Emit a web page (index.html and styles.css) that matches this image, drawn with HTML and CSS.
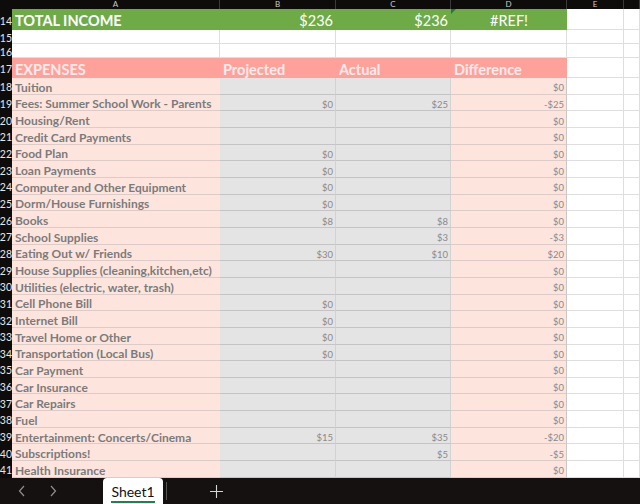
FILE: index.html
```html
<!DOCTYPE html>
<html lang="en">
<head>
    <meta charset="UTF-8">
    <title>Budget - Sheet1</title>
    <link rel="stylesheet" href="styles.css">
</head>
<body>
    <div class="sheet">
        <div class="row col-head">
            <div class="rn corner"></div>
            <div class="ch">A</div>
            <div class="ch">B</div>
            <div class="ch">C</div>
            <div class="ch">D</div>
            <div class="ch">E</div>
            <div class="ch"></div>
        </div>

        <div class="row r-total">
            <div class="rn">14</div>
            <div class="c green label-big">TOTAL INCOME</div>
            <div class="c green num-big">$236</div>
            <div class="c green num-big">$236</div>
            <div class="c green mid-big"><span class="err-flag"></span>#REF!</div>
            <div class="c blank"></div>
            <div class="c blank"></div>
        </div>

        <div class="row r-empty">
            <div class="rn">15</div>
            <div class="c blank"></div><div class="c blank"></div><div class="c blank"></div>
            <div class="c blank"></div><div class="c blank"></div><div class="c blank"></div>
        </div>
        <div class="row r-empty">
            <div class="rn">16</div>
            <div class="c blank"></div><div class="c blank"></div><div class="c blank"></div>
            <div class="c blank"></div><div class="c blank"></div><div class="c blank"></div>
        </div>

        <div class="row r-head">
            <div class="rn">17</div>
            <div class="c salmon label-big">EXPENSES</div>
            <div class="c salmon label-big">Projected</div>
            <div class="c salmon label-big">Actual</div>
            <div class="c salmon label-big">Difference</div>
            <div class="c blank"></div>
            <div class="c blank"></div>
        </div>

        <div id="body"></div>
    </div>

    <div class="tabbar">
        <span class="nav">
            <svg width="8" height="12" viewBox="0 0 8 12"><path d="M6 1 L1.5 6 L6 11" fill="none" stroke="#8f8f8f" stroke-width="1.2"/></svg>
        </span>
        <span class="nav">
            <svg width="8" height="12" viewBox="0 0 8 12"><path d="M2 1 L6.5 6 L2 11" fill="none" stroke="#8f8f8f" stroke-width="1.2"/></svg>
        </span>
        <div class="tab"><span>Sheet1</span></div>
        <span class="sep"></span>
        <span class="add">
            <svg width="13" height="13" viewBox="0 0 13 13"><path d="M6.5 0 V13 M0 6.5 H13" stroke="#d6d6d6" stroke-width="1.1"/></svg>
        </span>
    </div>

    <script>
        // row number, label, projected, actual, difference
        const expenses = [
            [18, "Tuition", "", "", "$0"],
            [19, "Fees: Summer School Work - Parents", "$0", "$25", "-$25"],
            [20, "Housing/Rent", "", "", "$0"],
            [21, "Credit Card Payments", "", "", "$0"],
            [22, "Food Plan", "$0", "", "$0"],
            [23, "Loan Payments", "$0", "", "$0"],
            [24, "Computer and Other Equipment", "$0", "", "$0"],
            [25, "Dorm/House Furnishings", "$0", "", "$0"],
            [26, "Books", "$8", "$8", "$0"],
            [27, "School Supplies", "", "$3", "-$3"],
            [28, "Eating Out w/ Friends", "$30", "$10", "$20"],
            [29, "House Supplies (cleaning,kitchen,etc)", "", "", "$0"],
            [30, "Utilities (electric, water, trash)", "", "", "$0"],
            [31, "Cell Phone Bill", "$0", "", "$0"],
            [32, "Internet Bill", "$0", "", "$0"],
            [33, "Travel Home or Other", "$0", "", "$0"],
            [34, "Transportation (Local Bus)", "$0", "", "$0"],
            [35, "Car Payment", "", "", "$0"],
            [36, "Car Insurance", "", "", "$0"],
            [37, "Car Repairs", "", "", "$0"],
            [38, "Fuel", "", "", "$0"],
            [39, "Entertainment: Concerts/Cinema", "$15", "$35", "-$20"],
            [40, "Subscriptions!", "", "$5", "-$5"],
            [41, "Health Insurance", "", "", "$0"]
        ];

        const body = document.getElementById("body");
        expenses.forEach(function (e) {
            const row = document.createElement("div");
            row.className = "row r-item";
            row.innerHTML =
                '<div class="rn">' + e[0] + '</div>' +
                '<div class="c pink label">' + e[1] + '</div>' +
                '<div class="c grey num">' + e[2] + '</div>' +
                '<div class="c grey num">' + e[3] + '</div>' +
                '<div class="c pink num">' + e[4] + '</div>' +
                '<div class="c blank"></div>' +
                '<div class="c blank"></div>';
            body.appendChild(row);
        });
    </script>
</body>
</html>
```

FILE: styles.css
```css
* {
    box-sizing: border-box;
}
body {
    margin: 0;
    width: 640px;
    height: 504px;
    overflow: hidden;
    background: #fff;
    font-family: Lato, "Open Sans", sans-serif;
}
.sheet {
    height: 478px;
    overflow: hidden;
}
#body {
    display: flex;
    flex-direction: column;
}
.row {
    display: grid;
    grid-template-columns: 12px 208px 116px 115px 116px 57px 1fr;
}
.col-head {
    height: 9px;
    background: #0e0c0b;
}
.r-total { height: 21px; }
.r-empty { height: 14px; }
.r-head { height: 20px; }
.r-item { height: 16.67px; }

.rn {
    background: #0e0c0b;
    color: #e6e6e6;
    font-size: 10.5px;
    white-space: nowrap;
    display: flex;
    align-items: center;
    justify-content: flex-end;
    padding-top: 2px;
}
.ch {
    color: #c9c9c9;
    font-size: 8px;
    line-height: 8px;
    text-align: center;
    border-right: 1px solid #3a3a3a;
}

.c {
    display: flex;
    align-items: center;
    white-space: nowrap;
    overflow: hidden;
    position: relative;
}
.blank {
    border-right: 1px solid #dedede;
    border-bottom: 1px solid #dedede;
}
.green {
    background: #6eab47;
    color: #fff;
}
.salmon {
    background: #ffa19b;
    color: #fdeceb;
}
.label-big {
    font-size: 14.5px;
    font-weight: 700;
    padding-left: 3px;
    padding-top: 2px;
}
.num-big {
    font-size: 14.5px;
    justify-content: flex-end;
    padding-right: 3px;
    padding-top: 2px;
}
.mid-big {
    font-size: 14.5px;
    justify-content: center;
    padding-top: 2px;
}
.err-flag {
    position: absolute;
    left: 0;
    top: 0;
    border-top: 5px solid #1f7a3a;
    border-right: 5px solid transparent;
}

.pink {
    background: #fde5de;
    border-bottom: 1px solid #dccbc6;
}
.grey {
    background: #e4e4e4;
    border-bottom: 1px solid #c4c4c4;
    border-right: 1px solid #d2d2d2;
}
.label {
    color: #7b7b7b;
    font-size: 12px;
    font-weight: 700;
    padding-left: 3px;
    padding-top: 3px;
}
.num {
    color: #8a8a8a;
    font-size: 9.5px;
    justify-content: flex-end;
    padding-right: 2px;
    padding-top: 4px;
}
.r-item .c.pink.num {
    border-right: 1px solid #c8c8c8;
}

.tabbar {
    height: 26px;
    background: #141110;
    display: flex;
    align-items: center;
}
.nav {
    width: 31px;
    display: flex;
    justify-content: center;
    margin-left: 6px;
}
.nav + .nav {
    margin-left: 0;
}
.tab {
    margin-left: 35px;
    width: 60px;
    height: 26px;
    background: #fff;
    border-radius: 4px 4px 0 0;
    display: flex;
    justify-content: center;
    align-items: center;
}
.tab span {
    font-size: 14px;
    color: #111;
    padding: 2px 0 1px;
    border-bottom: 2px solid #138a47;
    margin-top: 2px;
}
.sep {
    width: 1px;
    height: 18px;
    background: #555;
    margin-left: 3px;
}
.add {
    display: flex;
    margin-left: 43px;
}
```
